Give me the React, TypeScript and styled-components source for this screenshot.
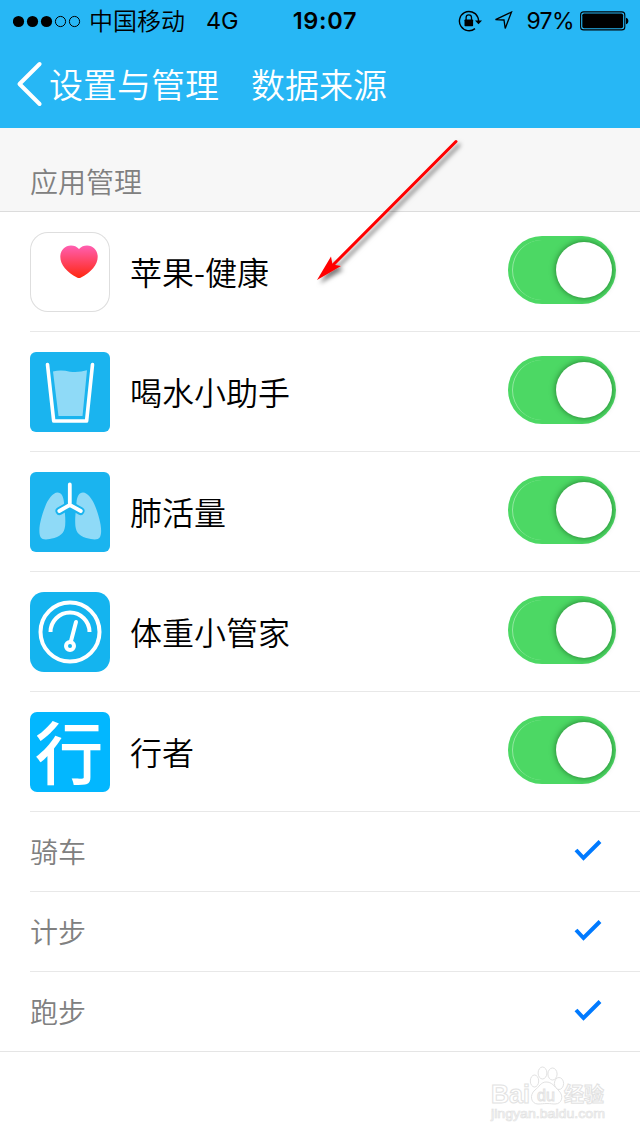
import React from 'react';
import styled, { createGlobalStyle } from 'styled-components';

const GlobalStyle = createGlobalStyle`
  * { box-sizing: border-box; }
  body { margin: 0; background: #fff; }
`;

const cjk = `"Noto Sans CJK SC", sans-serif`;

const Screen = styled.main`
  position: relative;
  display: flex;
  flex-direction: column;
  width: 640px;
  height: 1136px;
  overflow: hidden;
  background: #fff;
  color: #000;
  font-family: ${cjk};
  font-weight: 350;
`;

const Header = styled.header`
  height: 128px;
  background: #27b7f5;
`;

const StatusBar = styled.div`
  display: grid;
  grid-template-columns: 1fr auto 1fr;
  align-items: center;
  height: 40px;
  padding: 0 11px 0 13px;
  font-family: Inter, ${cjk};
  font-size: 24px;
  line-height: 40px;
`;

const StatusGroup = styled.div<{ $end?: boolean }>`
  display: flex;
  align-items: center;
  justify-content: ${(p) => (p.$end ? 'flex-end' : 'flex-start')};
  height: 40px;
`;

const Carrier = styled.span`
  margin: -2px 0 0 8px;
  font-family: ${cjk};
`;

const Network = styled.span`
  margin-left: 21px;
  padding-top: 1px;
  font-weight: 400;
  font-size: 23.5px;
  letter-spacing: -0.3px;
`;

const Time = styled.span`
  padding: 1px 0 0 8px;
  font-weight: 600;
  font-size: 23.5px;
  letter-spacing: 0.7px;
`;

const Percent = styled.span`
  margin: 0 6px 0 13px;
  padding-top: 1px;
  font-weight: 400;
  font-size: 23px;
  letter-spacing: -0.6px;
`;

const NavBar = styled.nav`
  display: flex;
  align-items: center;
  height: 88px;
  padding: 0 0 0 16px;
  color: #fff;
  font-size: 34px;
  line-height: 88px;
`;

const BackLabel = styled.span`
  margin: 0 0 0 5px;
`;

const Title = styled.span`
  margin: 0 0 0 32px;
`;

const SectionHeader = styled.h2`
  height: 84px;
  margin: 0;
  padding: 32px 0 0 30px;
  border-bottom: 1px solid #dcdcdc;
  background: #f7f7f7;
  color: #808080;
  font-size: 28px;
  font-weight: 350;
  line-height: 42px;
`;

const List = styled.ul<{ $closed?: boolean }>`
  margin: 0;
  padding: 0;
  list-style: none;
  border-bottom: ${(p) => (p.$closed ? '1px solid #e5e5e5' : '0')};
`;

const Row = styled.li<{ $small?: boolean }>`
  display: flex;
  align-items: center;
  height: ${(p) => (p.$small ? 80 : 120)}px;
  margin-left: 30px;
  padding-right: ${(p) => (p.$small ? 38 : 24)}px;
  border-bottom: 1px solid #e8e8e8;

  ${List}:last-of-type > &:last-child {
    height: 79px;
    border-bottom: 0;
  }
`;

const AppName = styled.span`
  flex: 1;
  margin: -2px 0 0 20px;
  font-size: 32px;
  line-height: 48px;
`;

const SportName = styled.span`
  flex: 1;
  margin-top: -1px;
  color: #808080;
  font-size: 28px;
  line-height: 42px;
`;

const Tile = styled.div<{ $bg: string; $radius: number; $outlined?: boolean }>`
  display: flex;
  align-items: flex-start;
  justify-content: center;
  flex: none;
  width: 80px;
  height: 80px;
  margin-top: 1px;
  border-radius: ${(p) => p.$radius}px;
  background: ${(p) => p.$bg};
  box-shadow: ${(p) => (p.$outlined ? 'inset 0 0 0 1px #dedede' : 'none')};
`;

const TileGlyph = styled.span`
  margin: -2px 2px 0 0;
  color: #fff;
  font-size: 68.5px;
  font-weight: 500;
  line-height: 80px;
`;

const Track = styled.div`
  display: flex;
  justify-content: flex-end;
  flex: none;
  position: relative;
  width: 108px;
  height: 68px;
  margin-bottom: 3px;
  padding: 6px 4px;
  border-radius: 34px;
  background: #4cd864;

  &::before {
    content: '';
    position: absolute;
    left: 4px;
    top: 4px;
    width: 60px;
    height: 60px;
    border-left: 1px solid rgba(255, 255, 255, 0.4);
    border-radius: 30px;
  }
`;

const Knob = styled.div`
  position: relative;
  width: 56px;
  height: 56px;
  border-radius: 50%;
  background: #fff;
  box-shadow: 0 0 6px 0 rgba(0, 50, 0, 0.6);
`;

const Overlay = styled.svg`
  position: absolute;
  left: 0;
  top: 0;
  pointer-events: none;
`;

const SignalDots = () => (
  <svg width="68" height="14" viewBox="0 0 68 14">
    {[0, 1, 2, 3, 4].map((i) => (
      <circle
        key={i}
        cx={5.5 + i * 14}
        cy="7.5"
        r={i < 3 ? 5.6 : 5.1}
        fill={i < 3 ? '#000' : 'none'}
        stroke={i < 3 ? 'none' : '#000'}
      />
    ))}
  </svg>
);

const RotationLock = () => (
  <svg width="24" height="22" viewBox="0 0 24 22">
    <path d="M19.8 7.2A9.6 9.6 0 1 0 17 18.6M19.8 7.2q.8 1.8.8 4" fill="none" stroke="#000" strokeWidth="1.4" />
    <path d="M17 10.5h7l-3.5 3.7z" />
    <rect x="6.5" y="9.6" width="8.6" height="6.6" rx=".7" />
    <path d="M8.1 10V7.6a2.7 2.7 0 0 1 5.4 0V10" fill="none" stroke="#000" strokeWidth="1.3" />
  </svg>
);

const LocationSvg = styled.svg`
  margin-left: 11px;
`;

const LocationArrow = () => (
  <LocationSvg width="20" height="20" viewBox="0 0 20 20">
    <path d="M18.500 1 2.500 8.700l8.500.300 1.200 8.500z" fill="none" stroke="#000" strokeWidth="1.3" />
  </LocationSvg>
);

const Battery = () => (
  <svg width="49" height="20" viewBox="0 0 49 20">
    <rect x=".6" y=".9" width="44.2" height="18" rx="3" fill="none" stroke="#000" strokeWidth="1.1" />
    <rect x="2.3" y="2.5" width="40.8" height="14.8" rx="1.8" />
    <path d="M46 6.8c3.2.6 3.2 5.8 0 6.4z" />
  </svg>
);

const BackChevron = () => (
  <svg width="28" height="46" viewBox="0 0 28 46">
    <path d="M23.6 3 3.5 23l20.1 20" fill="none" stroke="#fff" strokeWidth="4" strokeLinecap="round" strokeLinejoin="round" />
  </svg>
);

const HeartIcon = () => (
  <svg width="80" height="80" viewBox="0 0 80 80">
    <defs>
      <linearGradient id="heart" x1="0" y1="0" x2="0" y2="1">
        <stop offset="0" stopColor="#ff5fb2" />
        <stop offset="1" stopColor="#ff2710" />
      </linearGradient>
    </defs>
    <path
      d="M49 17C46.800 14.500 44 13.500 41 13.500c-6 0-10.700 4.600-10.700 11.300C30.300 33 37 40.500 47 45.500q2 1 4 0C61 40.500 67.700 33 67.700 24.800c0-6.700-4.700-11.300-10.700-11.300-3 0-5.800 1-8 3.500z"
      fill="url(#heart)"
    />
  </svg>
);

const WaterIcon = () => (
  <svg width="80" height="80" viewBox="0 0 80 80">
    <path d="M23 19.5q8-2 17 .2 9 1 17-1.5L52.5 64h-24z" fill="#8fdaf7" />
    <path d="M17.5 12.5 23.700 69h32.900L62.5 12.5" fill="none" stroke="#fff" strokeWidth="3.6" strokeLinecap="round" strokeLinejoin="round" />
  </svg>
);

const LungsIcon = () => (
  <svg width="80" height="80" viewBox="0 0 80 80">
    <g fill="#8fdaf7">
      <path d="M27.5 20.5c4 0 6 4 6.5 10 .3 7 1.5 13 1.3 20 0 9-3 13-11 15.5-7 2-12 2-13.5-.5C7 59 11.5 44 15 35c3-8 8-14.5 12.5-14.5z" />
      <path d="M53 20.5c-4 0-6 4-6.5 10-.3 7-1.5 13-1.3 20 0 9 3 13 11 15.5 7 2 12 2 13.5-.5C73.5 59 69 44 65.5 35c-3-8-8-14.5-12.5-14.5z" />
    </g>
    <path d="M40 12.5V33.5M29.5 39 40 33l10.5 6" fill="none" stroke="#1ab4ef" strokeWidth="8" strokeLinecap="round" />
    <path d="M39.8 12.5V33M29.3 39l10.500-6 11 6" fill="none" stroke="#fff" strokeWidth="3.8" strokeLinecap="round" />
  </svg>
);

const ScaleIcon = () => (
  <svg width="80" height="80" viewBox="0 0 80 80" fill="none" stroke="#fff" strokeWidth="4">
    <circle cx="40" cy="40" r="29.5" />
    <path d="M20.5 40a19.5 19.5 0 0 1 39 0" />
    <path d="M46 30 41 49" strokeLinecap="round" />
    <circle cx="40" cy="54" r="4" />
  </svg>
);

const CheckSvg = styled.svg`
  margin-bottom: 2px;
`;

const CheckIcon = () => (
  <CheckSvg width="28" height="22" viewBox="0 0 28 22">
    <path d="m2 10 7.500 8L26 1.500" fill="none" stroke="#007aff" strokeWidth="4" />
  </CheckSvg>
);

const Toggle = () => (
  <Track>
    <Knob />
  </Track>
);

const apps = [
  { name: '苹果-健康', bg: '#fff', radius: 18, outlined: true, icon: <HeartIcon /> },
  { name: '喝水小助手', bg: '#1ab4ef', radius: 6, icon: <WaterIcon /> },
  { name: '肺活量', bg: '#1ab4ef', radius: 6, icon: <LungsIcon /> },
  { name: '体重小管家', bg: '#14b4ef', radius: 14, icon: <ScaleIcon /> },
  { name: '行者', bg: '#02b7ff', radius: 7, icon: <TileGlyph>行</TileGlyph> },
];

const sports = ['骑车', '计步', '跑步'];

export default function App() {
  return (
    <Screen>
      <GlobalStyle />
      <Header>
        <StatusBar>
          <StatusGroup>
            <SignalDots />
            <Carrier>中国移动</Carrier>
            <Network>4G</Network>
          </StatusGroup>
          <Time>19:07</Time>
          <StatusGroup $end>
            <RotationLock />
            <LocationArrow />
            <Percent>97%</Percent>
            <Battery />
          </StatusGroup>
        </StatusBar>
        <NavBar>
          <BackChevron />
          <BackLabel>设置与管理</BackLabel>
          <Title>数据来源</Title>
        </NavBar>
      </Header>
      <SectionHeader>应用管理</SectionHeader>
      <List>
        {apps.map((app) => (
          <Row key={app.name}>
            <Tile $bg={app.bg} $radius={app.radius} $outlined={app.outlined}>
              {app.icon}
            </Tile>
            <AppName>{app.name}</AppName>
            <Toggle />
          </Row>
        ))}
      </List>
      <List $closed>
        {sports.map((name) => (
          <Row key={name} $small>
            <SportName>{name}</SportName>
            <CheckIcon />
          </Row>
        ))}
      </List>
      <Overlay width="640" height="1136" viewBox="0 0 640 1136">
        <defs>
          <filter id="arrowShadow" x="-10%" y="-10%" width="125%" height="125%">
            <feDropShadow dx="3" dy="3.5" stdDeviation="2" floodColor="#000" floodOpacity=".5" />
          </filter>
        </defs>
        <g filter="url(#arrowShadow)">
          <path d="M456 141.5 332 266" stroke="#f00" strokeWidth="3" strokeLinecap="round" />
          <path d="M317 280 331 256.5l1.500 8 8.500 1.500z" fill="#f00" />
        </g>
        <g fill="#fff" stroke="#e2e2e2" strokeWidth="1" fontFamily="Liberation Sans, Noto Sans CJK SC, sans-serif">
          <text x="491" y="1102.5" fontSize="25" fontWeight="700" textLength="39" lengthAdjust="spacingAndGlyphs">Bai</text>
          <ellipse cx="534.5" cy="1081" rx="4.2" ry="6" />
          <ellipse cx="542.5" cy="1073" rx="4.4" ry="6" />
          <ellipse cx="552.5" cy="1074" rx="4.6" ry="6" />
          <ellipse cx="559" cy="1083.5" rx="4.6" ry="6" />
          <path d="M546 1082c-5 0-7 5-11 8-6 5-4 14 3 14 4 0 5-.5 9-.5s5 .5 8 .5c7 0 9-8 4-13s-7-9-13-9z" />
          <text x="537" y="1101" fontSize="17" textLength="18" lengthAdjust="spacingAndGlyphs">du</text>
          <text x="564" y="1101.5" fontSize="20" fontWeight="700" fontFamily="Noto Sans CJK SC, sans-serif">经验</text>
          <text x="491" y="1118" fontSize="13" strokeWidth=".7" textLength="114" lengthAdjust="spacingAndGlyphs">jingyan.baidu.com</text>
        </g>
      </Overlay>
    </Screen>
  );
}
